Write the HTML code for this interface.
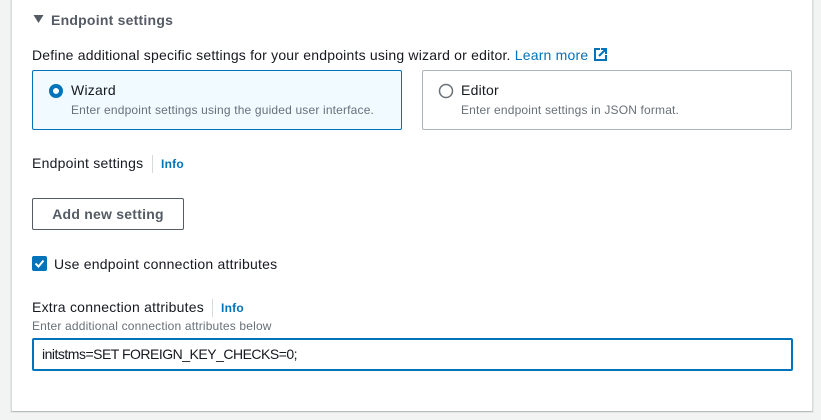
<!DOCTYPE html>
<html><head><style>
body{margin:0;width:821px;height:420px;background:#f2f3f3;font-family:"Liberation Sans",Arial,sans-serif;position:relative;overflow:hidden;color:#16191f;letter-spacing:.23px}
.card{position:absolute;left:11px;top:-2px;width:800px;height:413px;background:#fff;border-left:1px solid #d5dbdb;border-right:1px solid #d5dbdb;box-shadow:0 1px 1px rgba(0,28,36,.3)}
.a{position:absolute;white-space:nowrap}
.box{position:absolute;top:70px;width:368px;height:58px;border:1px solid #aab7b8;border-radius:2px;background:#fff}
.box.sel{background:#f1faff;border-color:#0073bb}
.t{position:absolute;left:38px;top:11px;font-size:14px}
.s{position:absolute;left:38px;top:32px;font-size:12px;color:#687078;letter-spacing:.17px}
.info{font-size:12px;font-weight:bold;color:#0073bb}
.sep{position:absolute;width:1px;height:18px;background:#d5dbdb}
</style></head><body>
<div class="card"></div>
<svg class="a" style="left:33px;top:14px" width="12" height="10"><path d="M0.5 1 L10.5 1 L5.5 9 Z" fill="#545b64"/></svg>
<div class="a" style="left:51px;top:12px;font-size:14px;font-weight:bold;color:#545b64">Endpoint settings</div>
<div class="a" style="left:32px;top:47px;font-size:14px;letter-spacing:.2px">Define additional specific settings for your endpoints using wizard or editor. <span style="color:#0073bb">Learn more</span></div>
<svg class="a" style="left:593px;top:47px" width="15" height="15"><path d="M7 2H2v11h11V8" fill="none" stroke="#0073bb" stroke-width="2"/><path d="M8 2h5v5M13 2L6 9" fill="none" stroke="#0073bb" stroke-width="2"/></svg>
<div class="box sel" style="left:32px"><svg class="a" style="left:15px;top:12px" width="16" height="16"><circle cx="8" cy="8" r="5" fill="#fff" stroke="#0073bb" stroke-width="4"/></svg><div class="t">Wizard</div><div class="s">Enter endpoint settings using the guided user interface.</div></div>
<div class="box" style="left:422px"><svg class="a" style="left:15px;top:12px" width="16" height="16"><circle cx="8" cy="8" r="6.5" fill="#fff" stroke="#687078" stroke-width="1.5"/></svg><div class="t">Editor</div><div class="s">Enter endpoint settings in JSON format.</div></div>
<div class="a" style="left:32px;top:155px;font-size:14px">Endpoint settings</div>
<div class="sep" style="left:152px;top:155px"></div>
<div class="a info" style="left:161px;top:157px">Info</div>
<div class="a" style="left:32px;top:198px;width:150px;height:30px;border:1px solid #545b64;border-radius:2px;font-size:14px;font-weight:bold;color:#545b64;text-align:center;line-height:30px">Add new setting</div>
<svg class="a" style="left:32px;top:256px" width="15" height="15"><rect width="15" height="15" rx="2" fill="#0073bb"/><path d="M3.5 7.5l3 3 5-6" fill="none" stroke="#fff" stroke-width="2"/></svg>
<div class="a" style="left:54px;top:256px;font-size:14px">Use endpoint connection attributes</div>
<div class="a" style="left:32px;top:299px;font-size:14px">Extra connection attributes</div>
<div class="sep" style="left:212px;top:299px"></div>
<div class="a info" style="left:221px;top:301px">Info</div>
<div class="a" style="left:32px;top:319px;font-size:12px;color:#687078;letter-spacing:.17px">Enter additional connection attributes below</div>
<div class="a" style="left:32px;top:338px;width:749px;height:29px;border:2px solid #0073bb;border-radius:2px;font-size:14px;line-height:29px;padding-left:8px;box-sizing:content-box;letter-spacing:-.5px">initstms=SET FOREIGN_KEY_CHECKS=0;</div>
</body></html>
